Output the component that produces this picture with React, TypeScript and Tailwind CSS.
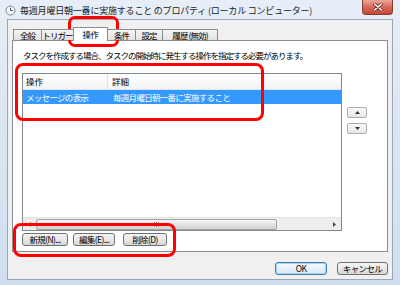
import React from 'react';

const tabs = [
  { label: '全般', w: 'w-[29px]' },
  { label: 'トリガー', w: 'w-[33px]' },
  { label: '操作', w: 'w-[35px]', active: true },
  { label: '条件', w: 'w-[29px]' },
  { label: '設定', w: 'w-[28px]' },
  { label: '履歴 (無効)', w: 'w-[56px]' },
];

const ClockIcon = () => (
  <svg width="11" height="11" viewBox="0 0 11 11">
    <circle cx="5.5" cy="5.5" r="4.5" fill="#f4f6f8" stroke="#7d8590" strokeWidth="1" />
    <path d="M5.5 2.6 V5.6 H7.8" fill="none" stroke="#3a3f45" strokeWidth="0.9" />
  </svg>
);

const Btn: React.FC<{ w: string; primary?: boolean; children: React.ReactNode }> = ({ w, primary, children }) => (
  <div
    className={`${w} h-[13px] flex items-center justify-center rounded-[3px] border text-[8.5px] tracking-[-0.6px] leading-none text-black ${
      primary
        ? 'border-[#3c7fb1] bg-linear-to-b from-[#f4f9fd] to-[#d6eaf8] shadow-[inset_0_0_0_1px_#a9d4f2]'
        : 'border-[#707070] bg-linear-to-b from-[#f4f4f4] via-[#e8e8e8] to-[#d6d6d6]'
    }`}
  >
    {children}
  </div>
);

const SmallBtn: React.FC<{ up?: boolean }> = ({ up }) => (
  <div className="w-[20px] h-[11px] rounded-[2px] border border-[#adadad] bg-linear-to-b from-[#fafafa] to-[#e6e6e6] flex items-center justify-center">
    <svg width="5" height="3" viewBox="0 0 5 3">
      {up ? <polygon points="2.5,0 5,3 0,3" fill="#333" /> : <polygon points="0,0 5,0 2.5,3" fill="#333" />}
    </svg>
  </div>
);

export default function App() {
  return (
    <div className="relative w-[400px] h-[285px] overflow-hidden bg-linear-to-b from-[#e7eef7] via-[#d9e5f2] to-[#d0dff0] font-['Noto_Sans_CJK_JP',sans-serif] text-black">
      {/* title bar */}
      <div className="flex h-[19px]">
        <div className="flex items-center pl-[5px] pt-[1px]">
          <ClockIcon />
          <span className="ml-[4px] text-[9px] tracking-[-0.2px] leading-none text-[#1a1a1a]">
            毎週月曜日朝一番に実施すること のプロパティ (ローカル コンピューター)
          </span>
        </div>
        <div className="ml-auto mr-[7px] w-[31px] h-[15px] rounded-b-[4px] border border-t-0 border-[#8c3a2e] bg-linear-to-b from-[#e9a99a] via-[#d46a58] to-[#c64735] flex items-center justify-center">
          <svg width="10" height="8" viewBox="0 0 10 8">
            <path d="M1.5 1 L8.5 7 M8.5 1 L1.5 7" stroke="#6b2a20" strokeWidth="3" strokeLinecap="round" />
            <path d="M1.5 1 L8.5 7 M8.5 1 L1.5 7" stroke="#ffffff" strokeWidth="1.6" strokeLinecap="round" />
          </svg>
        </div>
      </div>

      {/* client area */}
      <div className="mx-[7px] h-[261px] border border-[#9aa7b7] bg-[#f0f0f0] pl-[4px] pt-[7px]">
        <div className="relative z-10 -mb-px flex items-end h-[14px] pl-[1px]">
          {tabs.map((t, i) =>
            t.active ? (
              <div
                key={t.label}
                className={`${t.w} h-[14px] -ml-px border border-b-0 border-[#898c95] bg-white flex items-center justify-center pb-[1px] text-[8.5px] tracking-[-0.6px] leading-none`}
              >
                {t.label}
              </div>
            ) : (
              <div
                key={t.label}
                className={`${t.w} h-[11px] mb-px ${i > 0 ? '-ml-px' : ''} border border-b-0 border-[#898c95] bg-linear-to-b from-[#f5f5f5] to-[#e2e2e2] flex items-center justify-center whitespace-nowrap text-[8.5px] tracking-[-0.9px] leading-none`}
              >
                {t.label}
              </div>
            )
          )}
        </div>

        <div className="w-[376px] h-[212px] border border-[#898c95] bg-white pl-[9px] pt-[8px] flex flex-col">
          <div className="pl-[1px] text-[8.5px] tracking-[-1px] leading-[12px]">
            タスクを作成する場合、タスクの開始時に発生する操作を指定する必要があります。
          </div>

          <div className="mt-[12px] flex">
            <div className="w-[320px] h-[158px] border border-[#828790] flex flex-col">
              <div className="h-[16px] flex border-b border-[#e2e3e5] bg-linear-to-b from-white to-[#f2f3f5] text-[8.5px] leading-none">
                <div className="w-[85px] pl-[3px] flex items-center border-r border-[#e0e1e3]">操作</div>
                <div className="pl-[4px] flex items-center">詳細</div>
              </div>
              <div className="h-[14px] flex bg-[#3399ff] text-white text-[8.5px] tracking-[-0.7px] leading-none">
                <div className="w-[85px] pl-[3px] flex items-center">メッセージの表示</div>
                <div className="pl-[5px] flex items-center">毎週月曜日朝一番に実施すること</div>
              </div>
              <div className="flex-1" />
              <div className="h-[13px] flex items-center bg-[#eeeeee] border-t border-[#e4e4e4]">
                <div className="w-[13px] h-full flex items-center justify-center">
                  <svg width="3" height="5" viewBox="0 0 3 5">
                    <polygon points="3,0 3,5 0,2.5" fill="#444" />
                  </svg>
                </div>
                <div className="w-[241px] h-[11px] rounded-[2px] border border-[#a3a3a3] bg-linear-to-b from-[#f6f6f6] via-[#e4e4e4] to-[#d2d2d2] flex items-center justify-center gap-[1px]">
                  <div className="w-px h-[5px] bg-[#8a8a8a]" />
                  <div className="w-px h-[5px] bg-[#8a8a8a]" />
                  <div className="w-px h-[5px] bg-[#8a8a8a]" />
                </div>
                <div className="flex-1" />
                <div className="w-[13px] h-full flex items-center justify-center">
                  <svg width="3" height="5" viewBox="0 0 3 5">
                    <polygon points="0,0 3,2.5 0,5" fill="#444" />
                  </svg>
                </div>
              </div>
            </div>

            <div className="ml-[5px] pt-[34px] flex flex-col gap-[5px]">
              <SmallBtn up />
              <SmallBtn />
            </div>
          </div>

          <div className="mt-[2px] flex">
            <Btn w="w-[46px]">新規(N)...</Btn>
            <div className="ml-[5px]">
              <Btn w="w-[42px]">編集(E)...</Btn>
            </div>
            <div className="ml-[8px]">
              <Btn w="w-[44px]">削除(D)</Btn>
            </div>
          </div>
        </div>

        <div className="mt-[10px] w-[376px] flex justify-end gap-[10px]">
          <Btn w="w-[52px]" primary>
            OK
          </Btn>
          <Btn w="w-[51px]">キャンセル</Btn>
        </div>
      </div>

      {/* red annotation marks */}
      <div className="absolute left-[68px] top-[16px] w-[51px] h-[31px] border-[3px] border-[#ff0000] rounded-[7px]" />
      <div className="absolute left-[15px] top-[63px] w-[249px] h-[58px] border-[3px] border-[#ff0000] rounded-[8px]" />
      <div className="absolute left-[13px] top-[223px] w-[163px] h-[34px] border-[3px] border-[#ff0000] rounded-[8px]" />
    </div>
  );
}
